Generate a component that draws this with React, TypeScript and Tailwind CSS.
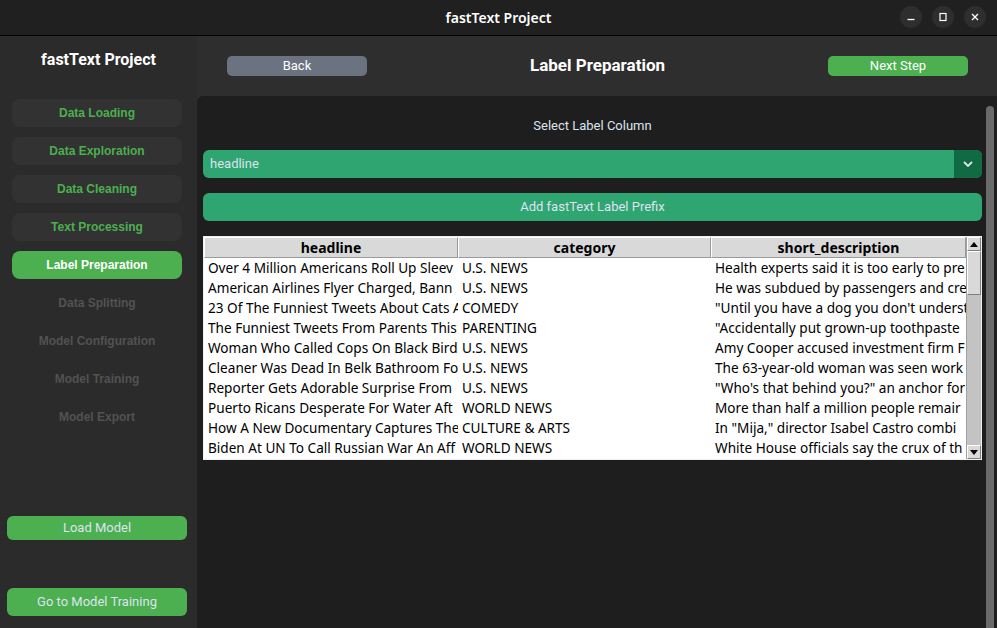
import React from 'react';

const steps = [
  { name: 'Data Loading', state: 'done' },
  { name: 'Data Exploration', state: 'done' },
  { name: 'Data Cleaning', state: 'done' },
  { name: 'Text Processing', state: 'done' },
  { name: 'Label Preparation', state: 'active' },
  { name: 'Data Splitting', state: 'locked' },
  { name: 'Model Configuration', state: 'locked' },
  { name: 'Model Training', state: 'locked' },
  { name: 'Model Export', state: 'locked' },
];

// only the part of each cell that fits in its column
const rows = [
  ['Over 4 Million Americans Roll Up Sleev', 'U.S. NEWS', 'Health experts said it is too early to pre'],
  ['American Airlines Flyer Charged, Bann', 'U.S. NEWS', 'He was subdued by passengers and cre'],
  ['23 Of The Funniest Tweets About Cats A', 'COMEDY', '"Until you have a dog you don\'t underst'],
  ['The Funniest Tweets From Parents This', 'PARENTING', '"Accidentally put grown-up toothpaste'],
  ['Woman Who Called Cops On Black Bird', 'U.S. NEWS', 'Amy Cooper accused investment firm F'],
  ['Cleaner Was Dead In Belk Bathroom Fo', 'U.S. NEWS', 'The 63-year-old woman was seen work'],
  ['Reporter Gets Adorable Surprise From', 'U.S. NEWS', '"Who\'s that behind you?" an anchor for'],
  ['Puerto Ricans Desperate For Water Aft', 'WORLD NEWS', 'More than half a million people remair'],
  ['How A New Documentary Captures The', 'CULTURE & ARTS', 'In "Mija," director Isabel Castro combi'],
  ['Biden At UN To Call Russian War An Aff', 'WORLD NEWS', 'White House officials say the crux of th'],
];

function WindowButton({ children }: { children: React.ReactNode }) {
  return (
    <div className="w-[22px] h-[22px] rounded-full bg-[#2e2e2e] flex items-center justify-center text-white">
      {children}
    </div>
  );
}

function TitleBar() {
  return (
    <div className="h-[36px] shrink-0 bg-[#202020] border-b border-black flex items-center relative">
      <div className="flex-1 text-center text-white text-[14px] font-semibold font-['Noto_Sans',sans-serif]">
        fastText Project
      </div>
      <div className="absolute right-[11px] top-[6px] flex gap-[10px]">
        <WindowButton>
          <svg width="10" height="10" viewBox="0 0 10 10"><path d="M1.5 7.5h7" stroke="currentColor" strokeWidth="1.3" /></svg>
        </WindowButton>
        <WindowButton>
          <svg width="10" height="10" viewBox="0 0 10 10"><rect x="2" y="1.5" width="6" height="7" fill="none" stroke="currentColor" strokeWidth="1.2" /></svg>
        </WindowButton>
        <WindowButton>
          <svg width="10" height="10" viewBox="0 0 10 10"><path d="M2 2l6 6M8 2l-6 6" stroke="currentColor" strokeWidth="1.3" /></svg>
        </WindowButton>
      </div>
    </div>
  );
}

function Sidebar() {
  return (
    <div className="w-[197px] shrink-0 bg-[#2b2b2b] flex flex-col pb-[12px]">
      <div className="pt-[12px] h-[63px] text-center text-white text-[16px] font-bold font-['Roboto',sans-serif]">
        fastText Project
      </div>
      <div className="flex flex-col gap-[10px] pl-[12px] pr-[15px]">
        {steps.map((s) => (
          <div
            key={s.name}
            className={`h-[28px] rounded-[8px] flex items-center justify-center text-[12px] font-bold font-['Liberation_Sans',sans-serif] ${
              s.state === 'active'
                ? 'bg-[#4caf50] text-white'
                : s.state === 'done'
                ? 'bg-[#323232] text-[#4caf50]'
                : 'text-[#525252]'
            }`}
          >
            {s.name}
          </div>
        ))}
      </div>
      <div className="flex-1" />
      <div className="pl-[7px] pr-[10px] flex flex-col">
        <button className="h-[24px] rounded-[6px] bg-[#4caf50] text-[#dce4ee] text-[13px] font-['Roboto',sans-serif]">
          Load Model
        </button>
        <button className="mt-[48px] h-[28px] rounded-[6px] bg-[#4caf50] text-[#dce4ee] text-[13px] font-['Roboto',sans-serif]">
          Go to Model Training
        </button>
      </div>
    </div>
  );
}

function Header() {
  return (
    <div className="h-[60px] shrink-0 bg-[#2e2e2e] flex items-center justify-between pl-[30px] pr-[30px] font-['Roboto',sans-serif]">
      <button className="w-[140px] h-[20px] rounded-[5px] bg-[#6b7280] text-white text-[13px]">Back</button>
      <div className="text-white text-[17px] font-bold">Label Preparation</div>
      <button className="w-[140px] h-[20px] rounded-[5px] bg-[#4caf50] text-white text-[13px]">Next Step</button>
    </div>
  );
}

function TableScrollbar() {
  return (
    <div className="w-[15px] bg-[#c3c3c3] flex flex-col border-l border-[#a0a0a0]">
      <div className="h-[14px] bg-[#d9d9d9] border border-t-white border-l-white border-r-[#808080] border-b-[#808080] flex items-center justify-center">
        <svg width="8" height="5" viewBox="0 0 8 5"><path d="M0 5L4 0L8 5Z" fill="#000" /></svg>
      </div>
      <div className="h-[44px] bg-[#d9d9d9] border border-t-white border-l-white border-r-[#808080] border-b-[#808080]" />
      <div className="flex-1" />
      <div className="h-[14px] bg-[#d9d9d9] border border-t-white border-l-white border-r-[#808080] border-b-[#808080] flex items-center justify-center">
        <svg width="8" height="5" viewBox="0 0 8 5"><path d="M0 0L4 5L8 0Z" fill="#000" /></svg>
      </div>
    </div>
  );
}

function DataTable() {
  const cols = ['headline', 'category', 'short_description'];
  const widths = ['w-[254px]', 'w-[253px]', 'w-[255px]'];
  return (
    <div className="h-[224px] border border-[#f0f0f0] bg-white flex font-['Noto_Sans',sans-serif] text-black">
      <div className="flex-1 flex flex-col min-w-0">
        <div className="h-[21px] flex bg-white">
          {cols.map((c, i) => (
            <div
              key={c}
              className={`${widths[i]} h-[21px] bg-[#d9d9d9] border border-t-white border-l-white border-r-[#9a9a9a] border-b-[#9a9a9a] flex items-center justify-center text-[14px] font-bold leading-none`}
            >
              {c}
            </div>
          ))}
        </div>
        {rows.map((r, ri) => (
          <div key={ri} className="h-[20px] flex items-center text-[13.6px]">
            {r.map((cell, ci) => (
              <div key={ci} className={`${widths[ci]} overflow-hidden whitespace-nowrap pl-[4px] leading-[20px]`}>
                {cell}
              </div>
            ))}
          </div>
        ))}
      </div>
      <TableScrollbar />
    </div>
  );
}

function Content() {
  return (
    <div className="flex-1 bg-[#1e1e1e] rounded-tl-[6px] flex min-h-0 font-['Roboto',sans-serif]">
      <div className="flex-1 pl-[6px] pr-[4px] flex flex-col">
        <div className="pt-[20px] h-[54px] text-center text-[#dce4ee] text-[13px]">Select Label Column</div>
        <div className="h-[28px] rounded-[6px] bg-[#2fa572] flex overflow-hidden">
          <div className="flex-1 flex items-center pl-[7px] text-[#dce4ee] text-[13px]">headline</div>
          <div className="w-[28px] bg-[#106a43] flex items-center justify-center">
            <svg width="10" height="6" viewBox="0 0 10 6"><path d="M1 1l4 4 4-4" fill="none" stroke="#dce4ee" strokeWidth="1.8" /></svg>
          </div>
        </div>
        <button className="mt-[15px] h-[28px] rounded-[6px] bg-[#2fa572] text-[#dce4ee] text-[13px]">
          Add fastText Label Prefix
        </button>
        <div className="mt-[15px]">
          <DataTable />
        </div>
      </div>
      <div className="w-[8px] mr-[4px] mt-[10px] rounded-t-[4px] bg-[#6a6a6a]" />
    </div>
  );
}

export default function App() {
  return (
    <div className="w-[997px] h-[628px] flex flex-col bg-[#2b2b2b] overflow-hidden">
      <TitleBar />
      <div className="flex-1 flex min-h-0">
        <Sidebar />
        <div className="flex-1 flex flex-col bg-[#2e2e2e]">
          <Header />
          <Content />
        </div>
      </div>
    </div>
  );
}
